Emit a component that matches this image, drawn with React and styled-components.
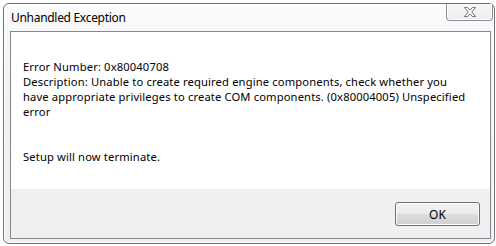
import React from 'react'
import styled, { createGlobalStyle } from 'styled-components'

const GlobalStyle = createGlobalStyle`
  html, body {
    margin: 0;
    padding: 0;
    background: #ffffff;
  }
  body {
    font-family: 'Noto Sans', 'Open Sans', sans-serif;
    font-size: 12px;
    color: #000;
  }
`

const Screen = styled.div`
  width: 496px;
  height: 246px;
  box-sizing: border-box;
  padding: 3px 1px 2px 3px;
  display: flex;
`

const Window = styled.div`
  flex: 1;
  display: flex;
  flex-direction: column;
  border: 1px solid #6e7378;
  border-radius: 6px;
  background: linear-gradient(#fbfbfc 0%, #f1f2f4 30%, #eeeff1 100%);
  box-shadow: inset 0 0 0 1px #ffffff;
`

const TitleBar = styled.div`
  height: 27px;
  flex: none;
  display: flex;
  align-items: flex-start;
  padding: 0 1px 0 7px;
`

const Title = styled.div`
  margin-top: 6px;
  font-size: 12px;
  line-height: 16px;
  letter-spacing: -0.3px;
  color: #000;
`

const CloseButton = styled.div`
  margin-left: auto;
  width: 45px;
  height: 16px;
  border: 1px solid #8c8f94;
  border-top: none;
  border-radius: 0 0 4px 4px;
  background: linear-gradient(#f7f7f8, #eceef0);
  box-shadow: inset 0 -1px 0 #ffffff, inset 1px 0 0 #ffffff, inset -1px 0 0 #ffffff;
  display: flex;
  align-items: center;
  justify-content: center;
`

const Client = styled.div`
  flex: 1;
  margin: 0 3px 4px 6px;
  border: 1px solid #85898e;
  display: flex;
  flex-direction: column;
  background: #ffffff;
`

const Body = styled.div`
  flex: 1;
  padding: 27px 12px 0 12px;
  font-size: 11.2px;
  line-height: 15px;
  letter-spacing: 0.14px;
`

const Para = styled.p`
  margin: 0;
  margin-top: ${p => p.gap || 0}px;
  white-space: nowrap;
`

const Footer = styled.div`
  height: 49px;
  flex: none;
  background: #f0f0f0;
  display: flex;
  justify-content: flex-end;
  align-items: flex-start;
  padding: 13px 10px 0 0;
  box-sizing: border-box;
`

const Button = styled.button`
  width: 85px;
  height: 24px;
  border: 1px solid #707070;
  border-radius: 3px;
  background: linear-gradient(#f2f2f2 0%, #ebebeb 50%, #dddddd 50%, #cfcfcf 100%);
  box-shadow: inset 0 0 0 1px #fcfcfc;
  font-family: inherit;
  font-size: 12px;
  color: #000;
  padding: 0;
`

const CloseGlyph = () => (
  <svg width="12" height="10" viewBox="0 0 12 10">
    <path
      d="M0.5 0.5 H3.5 L6 3.2 L8.5 0.5 H11.5 L7.7 5 L11.5 9.5 H8.5 L6 6.8 L3.5 9.5 H0.5 L4.3 5 Z"
      fill="#ffffff"
      stroke="#6a6d7a"
      strokeWidth="1"
      strokeLinejoin="round"
    />
  </svg>
)

const App = () => {
  return (
    <Screen>
      <GlobalStyle />
      <Window>
        <TitleBar>
          <Title>Unhandled Exception</Title>
          <CloseButton>
            <CloseGlyph />
          </CloseButton>
        </TitleBar>
        <Client>
          <Body>
            <Para>Error Number: 0x80040708</Para>
            <Para>
              Description: Unable to create required engine components, check whether you<br />
              have appropriate privileges to create COM components. (0x80004005) Unspecified<br />
              error
            </Para>
            <Para gap={30}>Setup will now terminate.</Para>
          </Body>
          <Footer>
            <Button>OK</Button>
          </Footer>
        </Client>
      </Window>
    </Screen>
  )
}

export default App
